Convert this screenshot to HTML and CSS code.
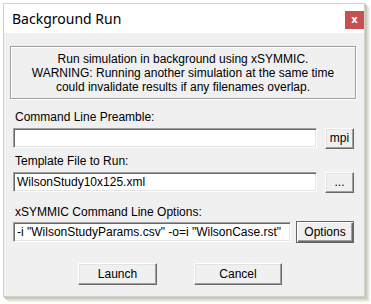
FILE: index.html
```html
<!DOCTYPE html>
<html>
<head>
<meta charset="utf-8">
<link rel="stylesheet" href="styles.css">
</head>
<body>
<div class="window">
  <div class="titlebar">
    <span class="title">Background Run</span>
    <span class="close">x</span>
  </div>
  <div class="content">
    <div class="info">
      <div>Run simulation in background using xSYMMIC.</div>
      <div>WARNING: Running another simulation at the same time</div>
      <div>could invalidate results if any filenames overlap.</div>
    </div>
    <div class="label l1">Command Line Preamble:</div>
    <div class="row r1">
      <div class="input in1"></div>
      <div class="btn small">mpi</div>
    </div>
    <div class="label l2">Template File to Run:</div>
    <div class="row r2">
      <div class="input in1">WilsonStudy10x125.xml</div>
      <div class="btn small">...</div>
    </div>
    <div class="label l3">xSYMMIC Command Line Options:</div>
    <div class="row r3">
      <div class="input in3">-i "WilsonStudyParams.csv" -o=i "WilsonCase.rst"</div>
      <div class="btn default opts">Options</div>
    </div>
    <div class="actions">
      <div class="btn launch">Launch</div>
      <div class="btn cancel">Cancel</div>
    </div>
  </div>
</div>
</body>
</html>
```
FILE: styles.css
```css
html, body {
  margin: 0;
  padding: 0;
  background: #ffffff;
}
body {
  width: 371px;
  height: 304px;
  overflow: hidden;
  font-family: "Liberation Sans", Arial, sans-serif;
  font-size: 12px;
  color: #000;
}
.window {
  box-sizing: border-box;
  margin: 3px 0 0 3px;
  width: 362px;
  height: 294px;
  border: 1px solid #d2d2cc;
  background: #f0f0f0;
  box-shadow: 1px 1px 0 #c4c4b2, 2px 2px 0 #cfcfbf, 3px 3px 0 #dadacd, 4px 4px 0 #e6e6dc, 5px 5px 0 #f2f2ec;
  display: flex;
  flex-direction: column;
}
.titlebar {
  height: 29px;
  background: #fff;
  display: flex;
  align-items: flex-start;
  justify-content: space-between;
}
.title {
  font-family: "Noto Sans", "Open Sans", sans-serif;
  font-size: 14px;
  line-height: 20px;
  margin: 5px 0 0 8px;
  color: #000;
}
.close {
  width: 19px;
  height: 18px;
  margin: 7px 0 0 0;
  background: #c75050;
  color: #fff;
  font-family: "DejaVu Sans", sans-serif;
  font-weight: bold;
  font-size: 10px;
  line-height: 17px;
  text-align: center;
}
.content {
  flex: 1;
  padding: 0 10px 0 9px;
}
.info {
  box-sizing: border-box;
  margin: 13px -2px 0 -3px;
  height: 53px;
  border: 1px solid #a0a0a0;
  box-shadow: inset 1px 1px 0 #fff, 1px 1px 0 #fff;
  text-align: center;
  line-height: 14px;
  padding-top: 5px;
}
.label {
  height: 14px;
  line-height: 14px;
  padding-left: 2px;
}
.l1 { margin-top: 11px; }
.l2 { margin-top: 6px; }
.l3 { margin-top: 13px; }
.row {
  display: flex;
  align-items: center;
  justify-content: space-between;
  height: 20px;
  margin-top: 4px;
}
.r3 { margin-top: 3px; }
.input {
  box-sizing: border-box;
  height: 20px;
  background: #fff;
  border-style: solid;
  border-width: 1px;
  border-color: #a0a0a0 #fff #fff #a0a0a0;
  box-shadow: inset 1px 1px 0 #696969, inset -1px -1px 0 #e3e3e3;
  padding: 0 0 0 3px;
  line-height: 18px;
  white-space: nowrap;
  overflow: hidden;
}
.in1 { width: 304px; }
.in3 { width: 278px; }
.btn {
  box-sizing: border-box;
  background: #f0f0f0;
  border: 1px solid;
  border-color: #fff #696969 #696969 #fff;
  box-shadow: inset -1px -1px 0 #a0a0a0, inset 1px 1px 0 #e3e3e3;
  text-align: center;
  white-space: nowrap;
}
.small {
  width: 29px;
  height: 21px;
  line-height: 19px;
}
.default {
  border-color: #646464;
  box-shadow: inset 1px 1px 0 #fff, inset -1px -1px 0 #696969, inset -2px -2px 0 #a0a0a0;
}
.opts {
  width: 58px;
  height: 22px;
  line-height: 20px;
}
.actions {
  display: flex;
  margin-top: 21px;
  padding-left: 65px;
  gap: 37px;
}
.launch, .cancel {
  height: 22px;
  line-height: 20px;
}
.launch { width: 79px; }
.cancel { width: 88px; }
```
